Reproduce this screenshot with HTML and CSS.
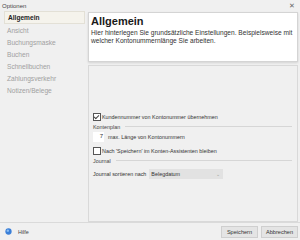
FILE: index.html
```html
<!DOCTYPE html>
<html lang="de">
<head>
    <meta charset="UTF-8">
    <title>Optionen</title>
    <link rel="stylesheet" href="styles.css">
</head>
<body>
    <div class="window">
        <div class="titlebar">
            <span class="title">Optionen</span>
            <span class="close">&#x2715;</span>
        </div>
        <div class="main">
            <ul class="nav">
                <li class="active">Allgemein</li>
                <li>Ansicht</li>
                <li>Buchungsmaske</li>
                <li>Buchen</li>
                <li>Schnellbuchen</li>
                <li>Zahlungsverkehr</li>
                <li>Notizen/Belege</li>
            </ul>
            <div class="content">
                <div class="header">
                    <h1>Allgemein</h1>
                    <p>Hier hinterlegen Sie grundsätzliche Einstellungen. Beispielsweise mit welcher Kontonummernlänge Sie arbeiten.</p>
                </div>
                <div class="form">
                    <label class="check-row checked"><span class="box"></span>Kundennummer von Kontonummer übernehmen</label>
                    <div class="group-label">Kontenplan</div>
                    <div class="input-row"><span class="num">7</span>max. Länge von Kontonummern</div>
                    <label class="check-row"><span class="box"></span>Nach 'Speichern' im Konten-Assistenten bleiben</label>
                    <div class="group-label">Journal</div>
                    <div class="select-row">
                        <span>Journal sortieren nach</span>
                        <span class="select">Belegdatum<span class="arrow">&#x2304;</span></span>
                    </div>
                </div>
            </div>
        </div>
        <div class="footer">
            <div class="help">
                <svg width="7" height="7" viewBox="0 0 8 8"><circle cx="4" cy="4" r="3.6" fill="#3a7fd8"/><circle cx="3.2" cy="3" r="1.4" fill="#8dc0f5"/></svg>
                <span>Hilfe</span>
            </div>
            <div class="buttons">
                <button>Speichern</button>
                <button>Abbrechen</button>
            </div>
        </div>
    </div>
</body>
</html>
```

FILE: styles.css
```css
body {
    margin: 0;
    font-family: "Liberation Sans", Arial, sans-serif;
    font-size: 5.4px;
    color: #333;
    background-color: #f0f0f0;
}

.window {
    width: 300px;
    height: 240px;
    display: flex;
    flex-direction: column;
}

.titlebar {
    height: 11px;
    display: flex;
    align-items: center;
    justify-content: space-between;
    padding: 0 5px 0 2px;
    font-size: 6px;
    color: #444;
}

.close {
    font-size: 7px;
    color: #666;
}

.main {
    flex: 1;
    display: flex;
}

/* Left menu */
.nav {
    list-style-type: none;
    margin: 0;
    padding: 0 3px 0 4px;
    width: 81px;
}

.nav li {
    height: 12px;
    line-height: 12px;
    padding-left: 3px;
    font-size: 6.6px;
    color: #a0a0a0;
}

.nav li.active {
    height: 11px;
    line-height: 11px;
    margin-bottom: 1px;
    background-color: #f5f3ec;
    border: 1px solid #e3e0d6;
    color: #222;
    font-weight: bold;
}

.content {
    flex: 1;
    display: flex;
    flex-direction: column;
    padding: 1px 2px 0 0;
}

.header {
    height: 48px;
    background-color: #fff;
    border: 1px solid #d4d4d4;
    box-shadow: 0 1px 2px rgba(0,0,0,0.12);
    padding: 0 2px 0 2px;
}

.header h1 {
    margin: 2px 0 0 0;
    font-size: 11px;
    color: #1a1a1a;
}

.header p {
    margin: 2px 0 0 0;
    line-height: 8px;
    font-size: 6.6px;
    color: #333;
}

.form {
    flex: 1;
    margin-top: 3px;
    border: 1px solid #d9d9d9;
    padding: 46px 5px 0 4px;
    display: flex;
    flex-direction: column;
}

.check-row {
    display: flex;
    align-items: center;
    height: 10px;
    gap: 1px;
}

.box {
    width: 6px;
    height: 6px;
    border: 1px solid #555;
    background-color: #fff;
    display: inline-block;
    position: relative;
}

.checked .box::after {
    content: "";
    position: absolute;
    left: 1px;
    top: 0;
    width: 2px;
    height: 4px;
    border: solid #444;
    border-width: 0 1px 1px 0;
    transform: rotate(45deg);
}

.group-label {
    display: flex;
    align-items: center;
    height: 9px;
    margin-top: 4px;
    gap: 5px;
    color: #444;
}

.group-label::after {
    content: "";
    flex: 1;
    border-top: 1px solid #d6d6d6;
}

.check-row + .group-label {
    margin-top: 0;
}

.input-row {
    display: flex;
    align-items: center;
    height: 11px;
    margin-bottom: 4px;
}

.num {
    width: 10px;
    height: 10px;
    background-color: #fff;
    text-align: right;
    padding-right: 1px;
    margin-right: 4px;
    line-height: 9px;
    font-size: 6px;
}

.select-row {
    display: flex;
    align-items: center;
    height: 11px;
    margin-top: 3px;
}

.select {
    margin-left: 3px;
    width: 72px;
    height: 10px;
    line-height: 10px;
    padding-left: 2px;
    background-color: #e2e2e2;
    color: #333;
    display: flex;
    justify-content: space-between;
}

.arrow {
    color: #999;
    padding-right: 3px;
    font-size: 5px;
}

.footer {
    height: 17px;
    border-top: 1px solid #dadada;
    display: flex;
    align-items: center;
    justify-content: space-between;
    padding: 0 2px 0 5px;
}

.help {
    display: flex;
    align-items: center;
    gap: 6px;
    color: #444;
}

.buttons {
    display: flex;
    gap: 3px;
}

button {
    font-family: "Liberation Sans", Arial, sans-serif;
    font-size: 5.6px;
    color: #333;
    height: 12px;
    width: 37px;
    padding: 0;
    background-color: #e4e4e4;
    border: 1px solid #cfcfcf;
}
```
